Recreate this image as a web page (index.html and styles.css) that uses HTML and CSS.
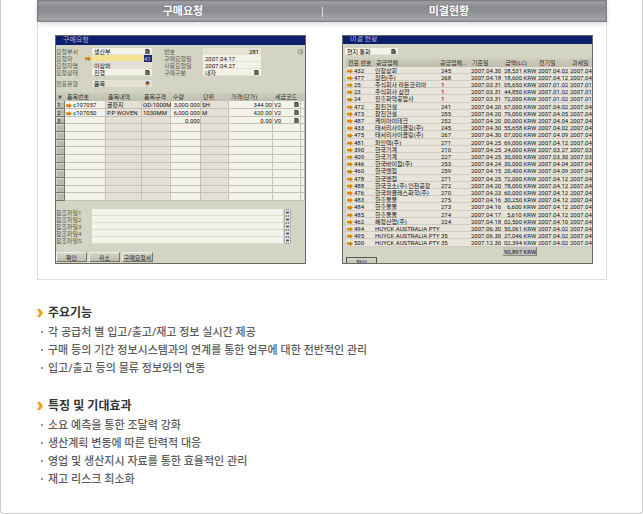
FILE: index.html
```html
<!DOCTYPE html>
<html lang="ko">
<head>
<meta charset="utf-8">
<title>구매요청 / 미결현황</title>
<link rel="stylesheet" href="styles.css">
</head>
<body>
<svg class="defs" aria-hidden="true">
  <symbol id="list" viewBox="0 0 6 6"><path d="M.5 0H4L5.5 1.5V6H.5Z" fill="#333"/><path d="M1.5 2H4M1.5 3.5H4.5M1.5 5H4.5" stroke="#ddd" stroke-width=".6"/></symbol>
  <symbol id="spin" viewBox="0 0 6 6"><path d="M3 0 6 3H0Z" fill="#1c2c5c"/><path d="M0 3H6L3 6Z" fill="#d9801a"/><path d="M1 3 3 1 5 3" fill="#46476b"/></symbol>
  <symbol id="file" viewBox="0 0 7 7"><rect x=".5" y=".5" width="6" height="6" rx="1" fill="#ecebe0" stroke="#777" stroke-width=".8" stroke-dasharray="1.5 .7"/><rect x="2" y="2.5" width="3" height="2" fill="#3a5f9c"/></symbol>
  <symbol id="chev" viewBox="0 0 6 8"><path d="M0 0H3L6 4 3 8H0L2.5 4Z" fill="#f79a0e"/></symbol>
</svg>
<main class="card">
  <section class="panel">
    <header class="bar"><h2>구매요청</h2><h2>미결현황</h2></header>
    <div class="shots">
      <article class="win">
        <div class="title">구매요청</div>
        <form class="fields">
          <label for="dept">요청부서</label><span class="box"><select id="dept"><option>생산부</option></select><svg><use href="#list"/></svg></span>
          <label for="no">번호</label><span class="box tan"><input id="no" class="num" value="281" readonly></span><span class="side">대</span>
          <label for="who" class="go">요청자</label><span class="box hot"><input id="who"><mark>41</mark></span>
          <label for="d1">구매요청일</label><span class="box"><input id="d1" value="2007.04.17"></span><span></span>
          <label for="name">요청자명</label><span class="box tan"><input id="name" value="이상하" readonly></span>
          <label for="d2">사용요청일</label><span class="box"><input id="d2" value="2007.04.27"></span><span></span>
          <label for="st">요청상태</label><span class="box"><select id="st"><option>진행</option></select><svg><use href="#list"/></svg></span>
          <label for="kind">구매구분</label><span class="box"><select id="kind"><option>내자</option></select><svg><use href="#list"/></svg></span><span></span>
        </form>
        <form class="fields type">
          <label for="ty">전표유형</label><span class="box tan"><select id="ty"><option>품목</option></select><svg><use href="#spin"/></svg></span>
        </form>
        <table class="items">
          <colgroup><col class="w9"><col class="w41"><col class="w36"><col class="w29"><col class="w30"><col class="w28"><col><col class="w28"><col class="w4"></colgroup>
          <thead><tr><th>#</th><th>품목번호</th><th>품목내역</th><th>품목규격</th><th>수량</th><th>단위</th><th>가격(단가)</th><th>세금코드</th><th></th></tr></thead>
          <tbody>
            <tr><td>1</td><td class="go">c107057</td><td>골판지</td><td>OD-1000M</td><td>3,000.000</td><td>SH</td><td>344.00</td><td>V2<svg><use href="#list"/></svg></td><td></td></tr>
            <tr><td>2</td><td class="go">c107050</td><td>P.P WOVEN</td><td>1030MM</td><td>6,000.000</td><td>M</td><td>420.00</td><td>V2<svg><use href="#list"/></svg></td><td></td></tr>
            <tr><td>3</td><td></td><td></td><td></td><td>0.000</td><td></td><td>0.00</td><td>V0<svg><use href="#list"/></svg></td><td></td></tr>
            <tr><td></td><td></td><td></td><td></td><td></td><td></td><td></td><td></td><td></td></tr>
            <tr><td></td><td></td><td></td><td></td><td></td><td></td><td></td><td></td><td></td></tr>
            <tr><td></td><td></td><td></td><td></td><td></td><td></td><td></td><td></td><td></td></tr>
            <tr><td></td><td></td><td></td><td></td><td></td><td></td><td></td><td></td><td></td></tr>
            <tr><td></td><td></td><td></td><td></td><td></td><td></td><td></td><td></td><td></td></tr>
            <tr><td></td><td></td><td></td><td></td><td></td><td></td><td></td><td></td><td></td></tr>
            <tr><td></td><td></td><td></td><td></td><td></td><td></td><td></td><td></td><td></td></tr>
            <tr><td></td><td></td><td></td><td></td><td></td><td></td><td></td><td></td><td></td></tr>
            <tr><td></td><td></td><td></td><td></td><td></td><td></td><td></td><td></td><td></td></tr>
            <tr><td></td><td></td><td></td><td></td><td></td><td></td><td></td><td></td><td></td></tr>
          </tbody>
        </table>
        <form class="files">
          <label for="f1">참조파일1</label><input id="f1"><svg><use href="#file"/></svg>
          <label for="f2">참조파일2</label><input id="f2"><svg><use href="#file"/></svg>
          <label for="f3">참조파일3</label><input id="f3"><svg><use href="#file"/></svg>
          <label for="f4">참조파일4</label><input id="f4"><svg><use href="#file"/></svg>
          <label for="f5">참조파일5</label><input id="f5"><svg><use href="#file"/></svg>
        </form>
        <div class="buttons"><button type="button">확인</button><button type="button">취소</button><button type="button">구매요청서</button></div>
      </article>
      <article class="win">
        <div class="title cut">미결 현황</div>
        <span class="box currency"><select aria-label="통화"><option>현지 통화</option></select><svg><use href="#list"/></svg></span>
        <table class="open">
          <colgroup><col class="w28"><col><col class="w30"><col class="w33"><col class="w34"><col class="w33"><col class="w22"></colgroup>
          <thead><tr><th>전표 번호</th><th>공급업체</th><th>공급업체...</th><th>기준일</th><th>금액(LC)</th><th>전기일</th><th>과세일</th></tr></thead>
          <tbody>
            <tr><td class="go">432</td><td>인창상회</td><td>245</td><td>2007.04.30</td><td>28,531 KRW</td><td>2007.04.02</td><td>2007.04</td></tr>
            <tr><td class="go">477</td><td>장천(주)</td><td>268</td><td>2007.04.18</td><td>18,600 KRW</td><td>2007.04.12</td><td>2007.04</td></tr>
            <tr><td class="go">25</td><td>주식회사 라돈코리아</td><td>1</td><td>2007.03.31</td><td>05,650 KRW</td><td>2007.01.02</td><td>2007.01</td></tr>
            <tr><td class="go">23</td><td>주식회사 삼전</td><td>1</td><td>2007.03.31</td><td>44,850 KRW</td><td>2007.01.02</td><td>2007.01</td></tr>
            <tr><td class="go">24</td><td>진흥화약공업사</td><td>1</td><td>2007.03.31</td><td>72,000 KRW</td><td>2007.01.02</td><td>2007.01</td></tr>
            <tr><td class="go">472</td><td>창진건설</td><td>241</td><td>2007.04.20</td><td>67,000 KRW</td><td>2007.04.02</td><td>2007.04</td></tr>
            <tr><td class="go">473</td><td>창진건설</td><td>255</td><td>2007.04.20</td><td>79,000 KRW</td><td>2007.04.05</td><td>2007.04</td></tr>
            <tr><td class="go">487</td><td>케이아이테크</td><td>252</td><td>2007.04.20</td><td>00,000 KRW</td><td>2007.04.04</td><td>2007.04</td></tr>
            <tr><td class="go">433</td><td>태서리사이클링(주)</td><td>245</td><td>2007.04.30</td><td>55,658 KRW</td><td>2007.04.02</td><td>2007.04</td></tr>
            <tr><td class="go">475</td><td>태서리사이클링(주)</td><td>267</td><td>2007.04.30</td><td>07,000 KRW</td><td>2007.04.09</td><td>2007.04</td></tr>
            <tr><td class="go">481</td><td>파인텍(주)</td><td>271</td><td>2007.04.25</td><td>69,000 KRW</td><td>2007.04.12</td><td>2007.04</td></tr>
            <tr><td class="go">390</td><td>한국기계</td><td>210</td><td>2007.04.25</td><td>24,000 KRW</td><td>2007.03.27</td><td>2007.03</td></tr>
            <tr><td class="go">409</td><td>한국기계</td><td>227</td><td>2007.04.25</td><td>30,000 KRW</td><td>2007.03.30</td><td>2007.03</td></tr>
            <tr><td class="go">446</td><td>한국바이첨(주)</td><td>253</td><td>2007.04.24</td><td>30,000 KRW</td><td>2007.04.04</td><td>2007.04</td></tr>
            <tr><td class="go">460</td><td>한국엔첨</td><td>259</td><td>2007.04.15</td><td>20,400 KRW</td><td>2007.04.09</td><td>2007.04</td></tr>
            <tr><td class="go">478</td><td>한국엔첨</td><td>271</td><td>2007.04.25</td><td>72,000 KRW</td><td>2007.04.12</td><td>2007.04</td></tr>
            <tr><td class="go">488</td><td>한국코소(주) 인천공장</td><td>272</td><td>2007.04.20</td><td>78,000 KRW</td><td>2007.04.12</td><td>2007.04</td></tr>
            <tr><td class="go">476</td><td>한국허큘레스화학(주)</td><td>270</td><td>2007.04.23</td><td>60,000 KRW</td><td>2007.04.12</td><td>2007.04</td></tr>
            <tr><td class="go">483</td><td>한흥물물</td><td>275</td><td>2007.04.16</td><td>30,250 KRW</td><td>2007.04.12</td><td>2007.04</td></tr>
            <tr><td class="go">484</td><td>한흥물물</td><td>273</td><td>2007.04.16</td><td>6,600 KRW</td><td>2007.04.12</td><td>2007.04</td></tr>
            <tr><td class="go">485</td><td>한흥물물</td><td>274</td><td>2007.04.17</td><td>5,610 KRW</td><td>2007.04.12</td><td>2007.04</td></tr>
            <tr><td class="go">462</td><td>혜정산업(주)</td><td>224</td><td>2007.04.18</td><td>02,500 KRW</td><td>2007.04.10</td><td>2007.04</td></tr>
            <tr><td class="go">494</td><td>HUYCK AUSTRALIA PTY</td><td></td><td>2007.06.30</td><td>50,061 KRW</td><td>2007.04.02</td><td>2007.04</td></tr>
            <tr><td class="go">495</td><td>HUYCK AUSTRALIA PTY</td><td>35</td><td>2007.06.30</td><td>27,046 KRW</td><td>2007.04.02</td><td>2007.04</td></tr>
            <tr><td class="go">500</td><td>HUYCK AUSTRALIA PTY</td><td>35</td><td>2007.12.30</td><td>02,394 KRW</td><td>2007.04.02</td><td>2007.04</td></tr>
          </tbody>
          <tfoot><tr><td colspan="4"></td><td class="sum">90,897 KRW</td><td colspan="2"></td></tr></tfoot>
        </table>
        <div class="buttons low"><button type="button">확인</button></div>
      </article>
    </div>
  </section>
  <section class="notes">
    <h3><svg><use href="#chev"/></svg>주요기능</h3>
    <ul>
      <li>각 공급처 별 입고/출고/재고 정보 실시간 제공</li>
      <li>구매 등의 기간 정보시스템과의 연계를 통한 업무에 대한 전반적인 관리</li>
      <li>입고/출고 등의 물류 정보와의 연동</li>
    </ul>
    <h3><svg><use href="#chev"/></svg>특징 및 기대효과</h3>
    <ul>
      <li>소요 예측을 통한 조달력 강화</li>
      <li>생산계획 변동에 따른 탄력적 대응</li>
      <li>영업 및 생산지시 자료를 통한 효율적인 관리</li>
      <li>재고 리스크 최소화</li>
    </ul>
  </section>
</main>
</body>
</html>
```
FILE: styles.css
```css
* { box-sizing: border-box; }
body { margin: 0; background: #fff; font-family: "Noto Sans", "Noto Sans CJK KR", sans-serif; }
h2, h3, ul { margin: 0; padding: 0; }
.defs { display: none; }
.card { border: 1px solid #ccc; border-top: 0; border-radius: 0 0 4px 4px; padding: 0 35px 25px 36px; }

.panel { border: 1px solid #ddd; border-top: 0; }
.bar { display: flex; height: 22px; margin: 0 -1px; border: 1px solid #7f7f82; background: linear-gradient(#a3a3a8, #8b8b92 30%, #8e8e94 55%, #aaaaae); box-shadow: inset 0 0 2px #77777b, 0 2px 5px #ddd; }
.bar h2 { flex: none; width: 50%; color: #fff; font-size: 11px; line-height: 20px; text-align: center; text-shadow: 0 0 2px #666; padding-left: 6px; }
.bar h2 + h2 { padding: 0 30px 0 0; background: linear-gradient(#ddd, #ddd) 0 6px / 1px 10px no-repeat; }
.shots { display: grid; grid-template-columns: 1fr 1fr; gap: 36px; padding: 13px 13px 15px 17px; }

.win { border: 1px solid #686868; background: #d3d4c4; font: 6px/7px Roboto, "Noto Sans CJK KR", sans-serif; color: #111; overflow: hidden; min-width: 0; height: 229px; }
.title { height: 9px; margin-bottom: 3px; padding-left: 7px; background: #0c1f6c; color: #a9b4d4; font-size: 7px; line-height: 9px; overflow: hidden; }
.title.cut { height: 8px; line-height: 7px; }
.win label { color: #5a5a52; white-space: nowrap; }
.win input, .win select { appearance: none; flex: 1; min-width: 0; width: 100%; height: 100%; margin: 0; padding: 0 2px; border: 0; border-radius: 0; outline: 0; background: transparent; font: inherit; color: inherit; }
.fields { display: grid; grid-template-columns: 36px 60px 51px 58px 1fr; grid-auto-rows: 7px; }
.fields label:nth-of-type(even) { padding-left: 12px; }
.type { margin: 4px 0; padding-bottom: 1px; }
.side { text-align: right; padding-right: 2px; color: #65655c; }
.box { display: flex; align-items: center; background: #f4f3ea; box-shadow: inset 0 -1px #e2e1d5; min-width: 0; }
.box svg { width: 5px; height: 5px; margin-right: 2px; flex: none; }
.box.tan { background: #e5e1d5; }
.box.hot { background: #f4e491; }
.win .num { text-align: right; }
mark { background: #1b2c70; color: #ccd; width: 8px; height: 7px; }
.go::before { content: ""; display: inline-block; width: 6px; height: 5px; margin-right: 1px; vertical-align: -1px; background: linear-gradient(#ffa51a, #a9560a); clip-path: polygon(0 25%, 50% 25%, 50% 0, 100% 50%, 50% 100%, 50% 75%, 0 75%); }
label.go { display: flex; flex-direction: row-reverse; justify-content: space-between; align-items: center; }

table { width: 100%; table-layout: fixed; border-collapse: collapse; border-spacing: 0; }
th, td { height: 7px; padding: 0 1px; line-height: 6px; font-weight: 400; text-align: left; white-space: nowrap; overflow: hidden; }
th { height: 9px; padding-left: 2px; color: #333; background: linear-gradient(#d0d0c0, #bdbdae); box-shadow: inset -1px 0 #c6c6b8; }
.w4 { width: 4px; } .w9 { width: 9px; } .w22 { width: 22px; } .w28 { width: 28px; } .w29 { width: 29px; }
.w30 { width: 30px; } .w33 { width: 33px; } .w34 { width: 34px; } .w36 { width: 36px; } .w41 { width: 41px; }
.items td { height: 8px; background: #f4f3ea; box-shadow: inset -1px -1px #c3c2b5; }
.items tr:nth-child(3n) td { height: 7px; }
.items td:first-child { background: #bcbcad; box-shadow: inset -1px -1px #77776c, inset 1px 1px #d8d8cc; }
.items td:nth-child(3), .items td:nth-child(4), .items td:nth-child(6) { background: #e5e0d5; }
.items td:nth-child(5), .items td:nth-child(7) { text-align: right; }
.items td svg { float: right; width: 5px; height: 5px; margin-right: 1px; }

.files { display: grid; grid-template-columns: 36px 1fr 8px; grid-auto-rows: 7px; padding: 8px 14px 8px 0; }
.win .files input { background: #f4f3ea; border-bottom: 1px solid #dddccf; }
.files svg { width: 7px; height: 7px; margin-left: 1px; }
.buttons { display: flex; gap: 2px; }
button { width: 31px; height: 10px; padding: 0; border: 1px solid; border-color: #eee #77776c #77776c #eee; background: linear-gradient(#d6d6c9, #bbbbab); font: inherit; color: #222; line-height: 7px; white-space: nowrap; }

.currency { width: 53px; height: 7px; margin: 4px 0 3px 2px; }
.open { margin-left: 3px; width: calc(100% - 3px); }
.open td { background: #e8e4d9; box-shadow: inset 0 -1px #cfcdc0; }
.open tbody tr:nth-child(5n) td { height: 8px; }
.open th:nth-child(3) { padding: 0; }
.open tbody td:nth-child(5) { text-align: right; }
.open td:last-child { padding: 0; }
.open tfoot td { height: 9px; background: none; box-shadow: none; }
.open tfoot .sum { background: #c4c4b6; box-shadow: inset -1px -1px #8a8a7e; text-align: right; }
.low { padding: 1px 0 0 3px; }
.low button { border-color: #55554c; }

.notes { padding-top: 23px; }
h3 { display: flex; align-items: center; gap: 5px; font-size: 12px; line-height: 20px; color: #333; }
h3 svg { width: 6px; height: 8px; }
ul { list-style: none; margin-bottom: 19px; }
ul:last-child { margin-bottom: 0; }
li { display: flex; align-items: center; gap: 5px; padding-left: 4px; font-size: 11px; font-weight: 500; line-height: 18px; color: #5c5c5c; }
li::before { content: ""; width: 2px; height: 2px; background: #999; }
```
